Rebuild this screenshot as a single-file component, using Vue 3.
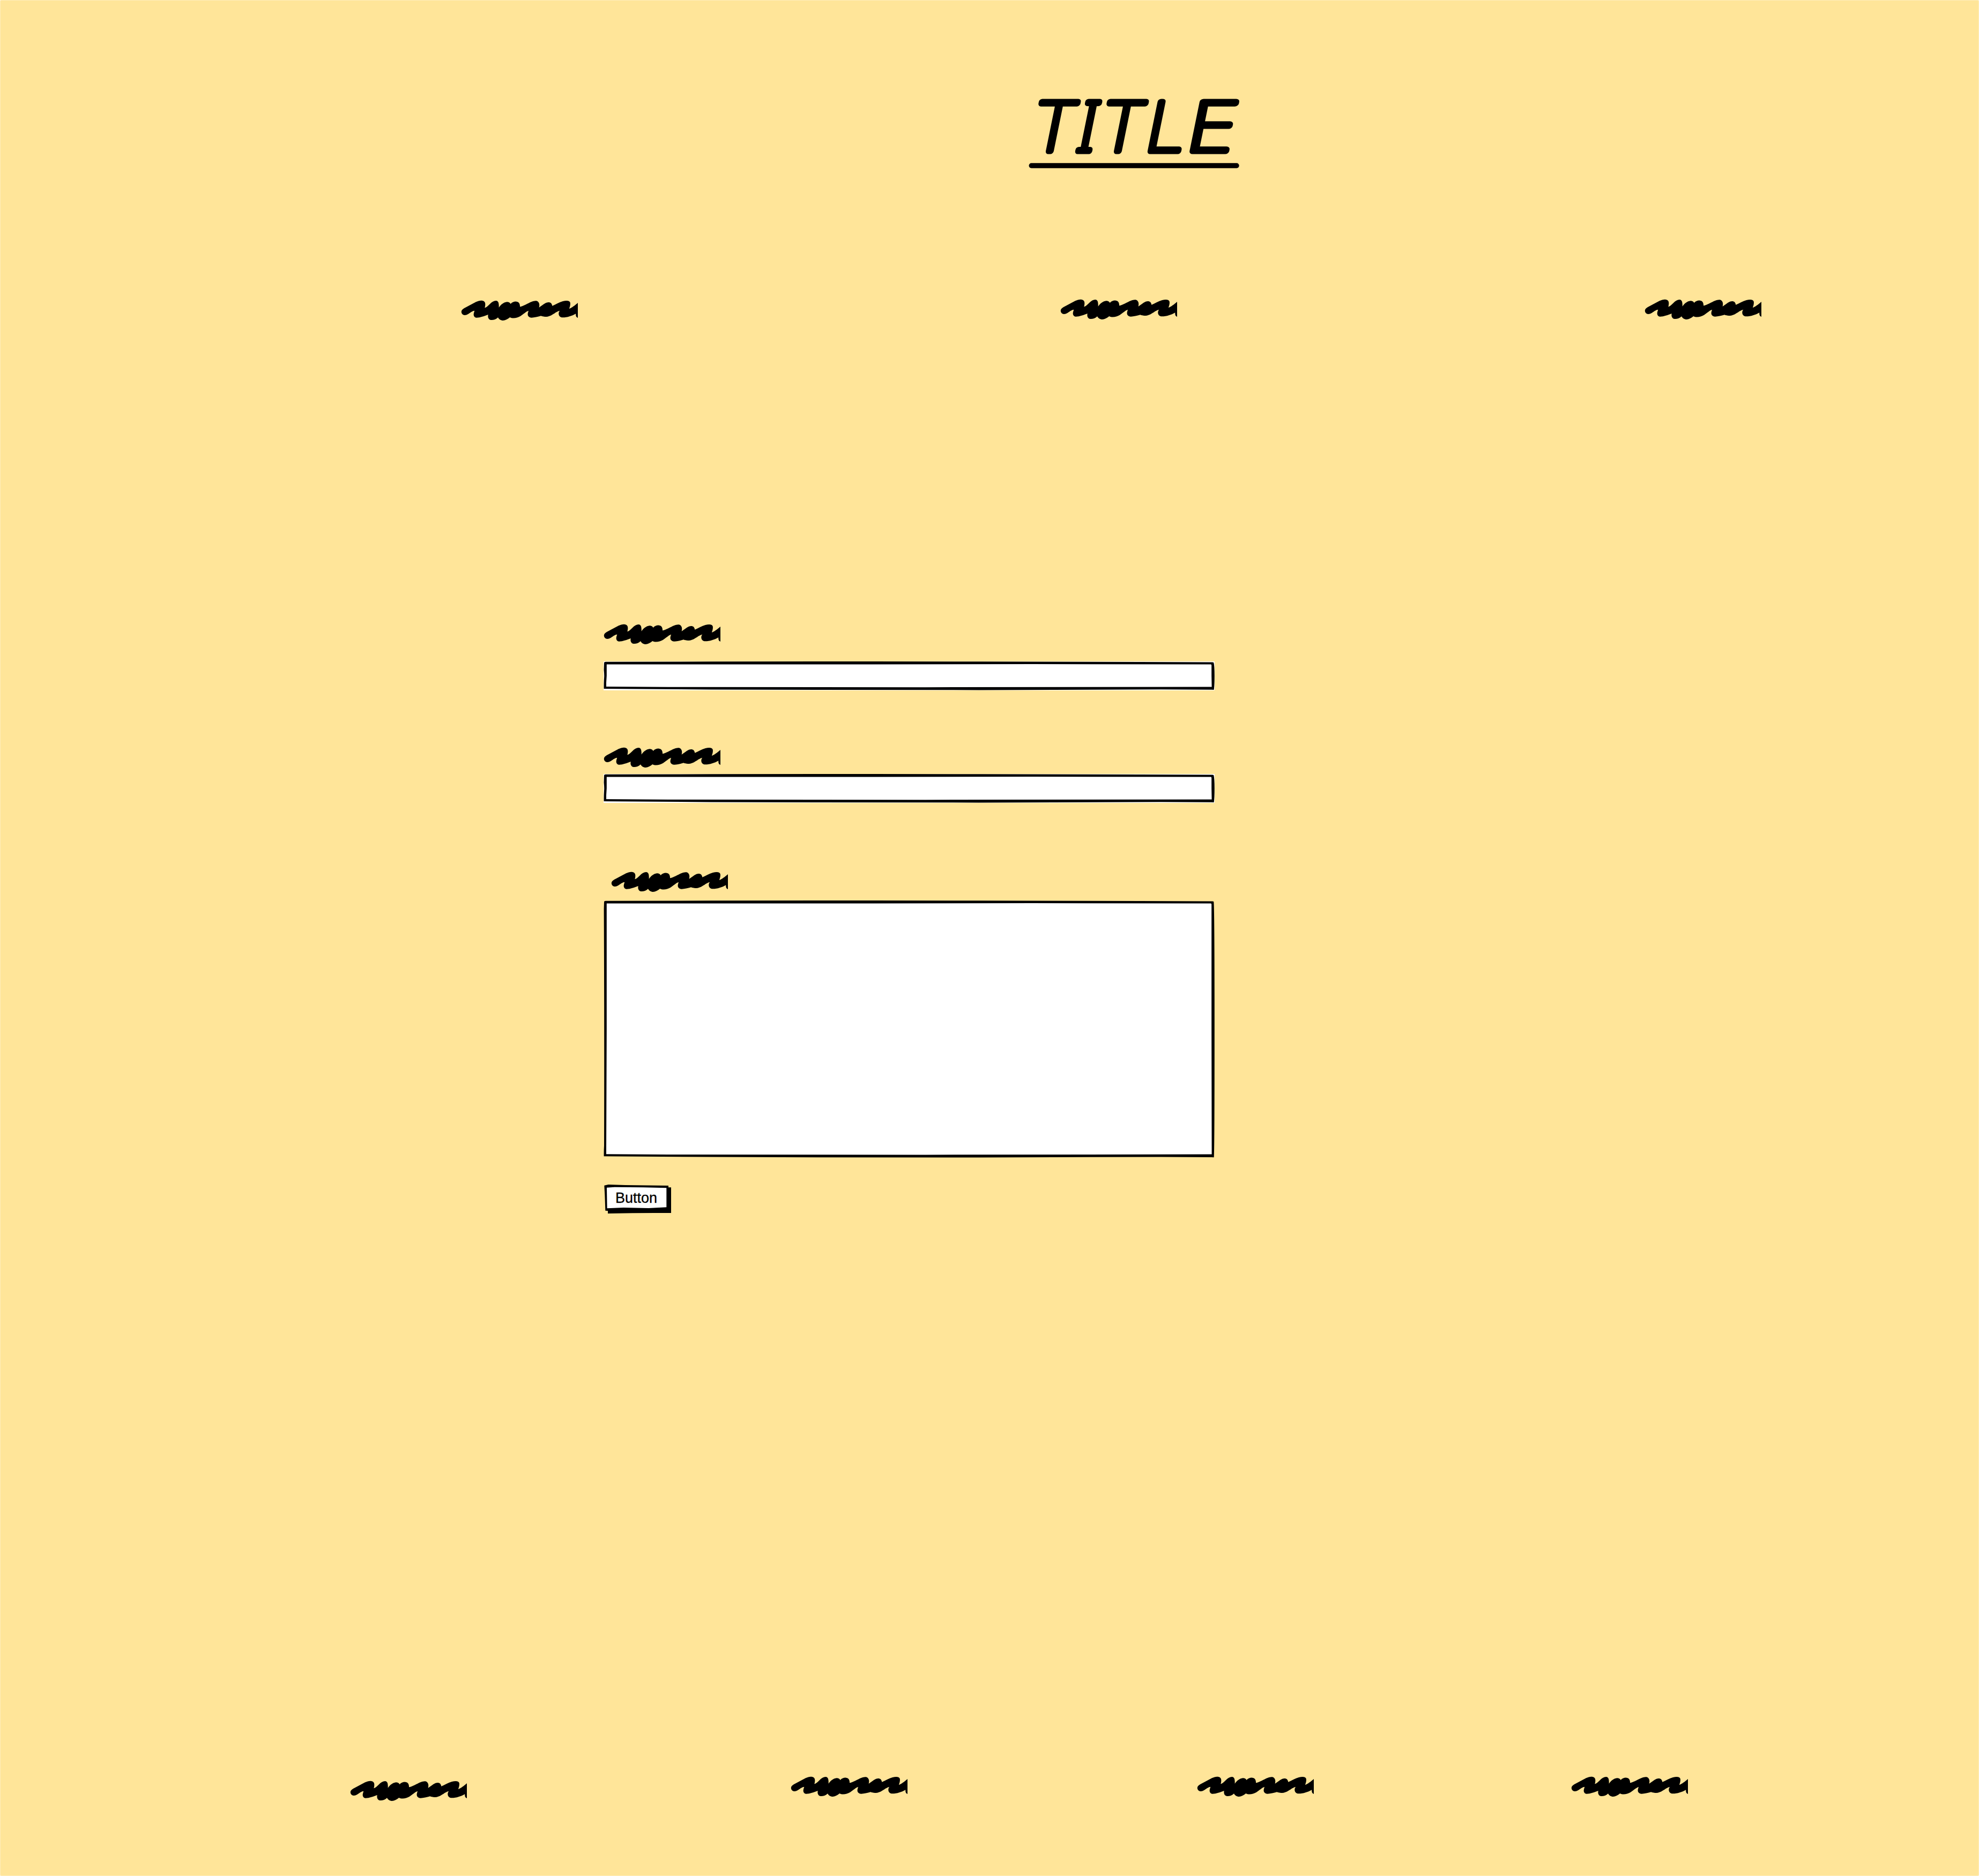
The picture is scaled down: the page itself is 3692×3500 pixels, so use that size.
<script setup>
import { h } from 'vue'

const SCRIBBLE =
  'M35 120 C28 108 35 97 48 90 L100 62 C120 50 135 47 146 47 C160 48 166 56 166 68 C166 78 164 84 163 88 ' +
  'C172 86 180 78 190 68 C203 55 214 48 226 48 C240 50 243 60 242 86 C255 68 270 57 287 55 C297 55 305 60 308 66 ' +
  'C315 57 328 52 340 53 C354 54 361 65 360 82 C380 78 405 62 425 54 C440 48 452 46 461 53 C470 62 470 74 467 86 ' +
  'C480 78 492 66 508 59 C525 54 538 58 541 77 C560 70 580 56 600 51 C620 46 636 46 641 58 C644 72 638 84 636 93 ' +
  'C650 88 665 76 684 60 V144 C674 140 672 132 673 121 C650 134 625 142 600 142 C582 141 576 130 577 118 ' +
  'C578 110 580 108 583 104 C570 106 555 118 545 124 C528 135 515 139 503 138 C492 137 484 136 478 133 ' +
  'C460 138 440 143 425 143 C405 141 401 128 405 115 L408 104 C395 108 380 123 363 134 C345 145 320 150 304 141 ' +
  'C290 152 278 159 264 159 C250 158 242 150 237 142 C225 154 210 157 198 156 C184 154 179 142 182 126 ' +
  'C160 134 135 144 115 143 C100 140 98 126 104 110 L106 104 C95 104 85 113 70 123 C56 131 42 131 35 120Z'

const Scribble = () =>
  h('svg', { width: 218, height: 39, viewBox: '30 45 654 117', 'aria-hidden': 'true' }, [h('path', { d: SCRIBBLE })])

// Hand-drawn frame for a box of height b: outer contour followed by the inner one
const frame = (b) =>
  `M1 3 Q1 .7 4 .7 L200 .3 L500 0 L700 .2 L1000 1 L1136 1.6 L1138.2 2 Q1139.8 8 1139.8 ${b / 2} ` +
  `Q1139.8 ${b - 8} 1138.6 ${b - 0.4} L1134 ${b - 0.6} L1040 ${b - 1.2} L700 ${b} L400 ${b - 0.3} L200 ${b - 1} L0.6 ${b - 2.4} ` +
  `Q.4 ${b - 12} 1 ${b - 22} Q1.6 ${b / 2} .6 16Z ` +
  `M5.8 5.6 V${b / 2} L5 ${b - 14} V${b - 6.4} L120 ${b - 5.6} L600 ${b - 5.2} L1134.6 ${b - 6} L1134.2 ${b / 2} V7 Q1134 5.8 1133 5.6 L800 5 L500 5.4Z`
</script>

<template>
  <main class="page">
    <header>
      <svg class="title" width="440" height="170" viewBox="1900 160 440 170">
        <g transform="translate(0 281.5) skewX(-11.5)">
          <text class="title-text" y="0"><tspan x="1924.7" textLength="67.5" lengthAdjust="spacingAndGlyphs">T</tspan><tspan x="2003.5">I</tspan><tspan x="2051.7" textLength="67.5" lengthAdjust="spacingAndGlyphs">T</tspan><tspan x="2132.8" textLength="68" lengthAdjust="spacingAndGlyphs">L</tspan><tspan x="2209.8" textLength="86.5" lengthAdjust="spacingAndGlyphs">E</tspan></text>
        </g>
        <path class="underline" d="M1924.2 309H2307" />
      </svg>
      <nav><Scribble /><Scribble /><Scribble /></nav>
    </header>

    <form class="form" @submit.prevent>
      <label class="field"><Scribble />
        <svg class="input" width="1140" height="54"><path fill-rule="evenodd" :d="frame(53.4)" /></svg>
      </label>
      <label class="field tight"><Scribble />
        <svg class="input" width="1140" height="54"><path fill-rule="evenodd" :d="frame(53.4)" /></svg>
      </label>
      <label class="field message"><Scribble />
        <svg class="area" width="1140" height="480"><path class="fill" d="M3 3H1137V476H3Z" /><path fill-rule="evenodd" :d="frame(479.6)" /></svg>
      </label>
      <button class="button" type="submit">
        <svg width="126" height="56" viewBox="78 234 378 168">
          <path d="M82 245 L105 240 L200 243 L441 246 V256 H456 V399 H360 L240 400 L102 402 V387 L88 386 L85 300Z" />
          <path class="fill" d="M96 257 L140 254 L300 256 L430 259 V367 L330 372 L190 369 L98 373Z" />
        </svg>
        <span>Button</span>
      </button>
    </form>

    <footer><Scribble /><Scribble /><Scribble /><Scribble /></footer>
  </main>
</template>

<style>
body { margin: 0; background: #fff; }
</style>

<style scoped>
.page {
  box-sizing: border-box;
  width: 3692px;
  height: 3500px;
  display: flex;
  flex-direction: column;
  overflow: hidden;
  background: #ffe599;
  border-radius: 3px;
  box-shadow: inset 0 0 0 1px #ffedbb;
}
svg { display: block; flex: none; }
header { padding-top: 160px; }
.title { margin-left: 1900px; overflow: visible; }
.title-text {
  font-family: "Noto Sans", sans-serif;
  font-weight: 100;
  font-size: 128.8px;
  stroke: #000;
  stroke-width: 11px;
  stroke-linejoin: round;
}
.underline { stroke: #000; stroke-width: 9.4px; stroke-linecap: round; }
nav {
  display: flex;
  justify-content: space-between;
  align-items: flex-start;
  margin: 228px 406px 0 860px;
}
nav > :first-child { margin-top: 2px; }
nav > :nth-child(2) { margin-left: 28px; }
.form {
  width: 1140px;
  margin: 565px 0 0 1126px;
}
.field { display: block; }
.field > .input { margin-top: 31px; background: #fff; }
.field.tight { margin-top: 106px; }
.field.tight > .input { margin-top: 11px; }
.field.message { margin-top: 128px; }
.field.message > :first-child { margin-left: 14px; }
.area { margin-top: 15px; }
.fill { fill: #fff; }
.button {
  display: grid;
  margin: 48px 0 0;
  padding: 0;
  border: 0;
  background: none;
  color: #000;
  font: 27px/30px "Liberation Sans", Arial, sans-serif;
  text-align: left;
}
.button > * { grid-area: 1 / 1; }
.button > span { padding: 12px 0 0 22px; -webkit-text-stroke: 0.35px #000; }
footer {
  display: flex;
  margin: 1050px 0 0 653px;
}
footer > :first-child { margin-top: 8px; }
footer > :nth-child(2) { margin-left: 604px; }
footer > :nth-child(3) { margin-left: 540px; }
footer > :nth-child(4) { margin-left: 480px; }
</style>
